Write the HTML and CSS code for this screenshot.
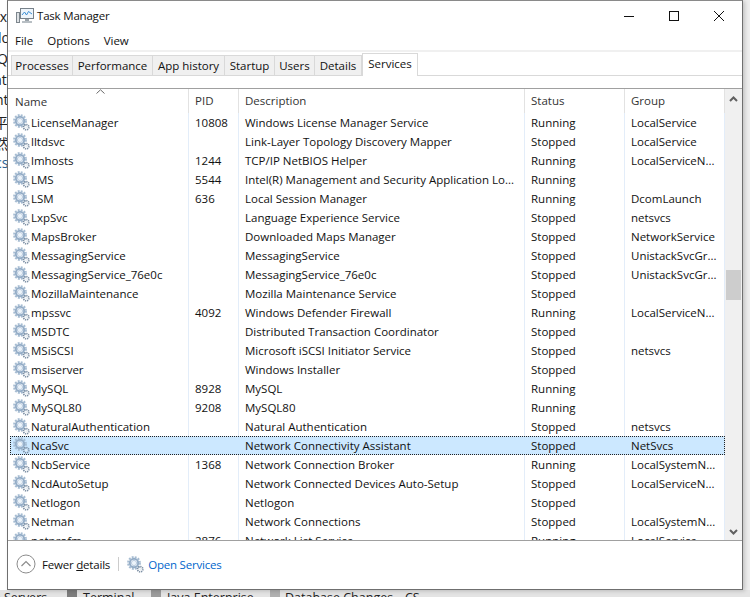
FILE: index.html
```html
<!DOCTYPE html>
<html lang="en">
<head>
<meta charset="utf-8">
<title>Task Manager</title>
<link rel="stylesheet" href="styles.css">
</head>
<body>
<svg class="defs" width="0" height="0" aria-hidden="true">
  <defs>
    <symbol id="gear" viewBox="0 0 17 17">
      <g fill="none">
        <circle cx="7" cy="7" r="6" stroke="#a6bcd2" stroke-width="1.8" stroke-dasharray="1.9 1.25"/>
        <circle cx="7" cy="7" r="4.2" stroke="#94adc7" stroke-width="2"/>
        <circle cx="7" cy="7" r="2.6" fill="#edf4fa" stroke="#bccde0" stroke-width="1"/>
        <circle cx="13.2" cy="13.2" r="2.6" stroke="#7b8ea3" stroke-width="1.8" stroke-dasharray="1.2 .8"/>
        <circle cx="13.2" cy="13.2" r="1" fill="#e6edf3"/>
      </g>
    </symbol>
  </defs>
</svg>
<div class="desktop">
  <div class="behind-left">
    <span class="frag f1">ax</span>
    <span class="frag f2">do</span>
    <span class="frag f3">Qu</span>
    <span class="frag f4">at</span>
    <span class="frag f5">ht</span>
    <span class="frag f6">平</span>
    <span class="frag f7">然</span>
    <span class="frag f8">cs</span>
  </div>
  <div class="behind-bottom">
    <span class="b1">p Servers</span>
    <i class="chip c2"></i>
    <span class="b2">Terminal</span>
    <i class="chip c3"></i>
    <span class="b3">Java Enterprise</span>
    <i class="chip c4"></i>
    <span class="b4">Database Changes</span>
    <span class="b5">CS</span>
  </div>

  <main class="window">
    <header class="titlebar">
      <svg class="app-icon" width="18" height="16" viewBox="0 0 18 16">
        <rect x="0.5" y="4.5" width="3" height="10" fill="#dfe3e6" stroke="#7d868d"/>
        <rect x="4.5" y="0.5" width="13" height="10" fill="#eef5fb" stroke="#77818a"/>
        <path d="M6 7 L8.5 4 L10.5 7 L12.5 3.5 L16 6" fill="none" stroke="#3b8fd6" stroke-width="1"/>
        <rect x="9" y="11" width="4" height="2" fill="#9aa3aa"/>
        <rect x="6" y="13" width="10" height="2" fill="#b8bfc4"/>
      </svg>
      <span class="title">Task Manager</span>
      <div class="win-controls">
        <svg width="12" height="12" viewBox="0 0 12 12"><path d="M1 6.5H11" stroke="#111" fill="none"/></svg>
        <svg width="12" height="12" viewBox="0 0 12 12"><rect x="1.5" y="1.5" width="9" height="9" stroke="#111" fill="none"/></svg>
        <svg width="12" height="12" viewBox="0 0 12 12"><path d="M1 1L11 11M11 1L1 11" stroke="#111" fill="none"/></svg>
      </div>
    </header>
    <nav class="menubar">
      <span>File</span><span>Options</span><span>View</span>
    </nav>
    <div class="tabs">
      <span class="tab t-proc">Processes</span>
      <span class="tab t-perf">Performance</span>
      <span class="tab t-app">App history</span>
      <span class="tab t-start">Startup</span>
      <span class="tab t-users">Users</span>
      <span class="tab t-det">Details</span>
      <span class="tab active t-svc">Services</span>
    </div>
    <section class="table-area">
      <div class="table">
        <div class="row head">
          <div class="cell name sort-cell"><svg class="sort" width="9" height="5" viewBox="0 0 9 5"><path d="M0.5 4.5L4.5 0.8L8.5 4.5" fill="none" stroke="#6a6a6a"/></svg>Name</div>
          <div class="cell pid">PID</div>
          <div class="cell desc">Description</div>
          <div class="cell status">Status</div>
          <div class="cell group">Group</div>
        </div>
        <div class="rows" id="rows"></div>
      </div>
      <aside class="scrollbar">
        <svg class="arrow" width="9" height="6" viewBox="0 0 9 6"><path d="M1 5L4.5 1.5L8 5" fill="none" stroke="#606060" stroke-width="2"/></svg>
        <div class="track"><div class="thumb"></div></div>
        <svg class="arrow" width="9" height="6" viewBox="0 0 9 6"><path d="M1 1L4.5 4.5L8 1" fill="none" stroke="#606060" stroke-width="2"/></svg>
      </aside>
    </section>
    <footer class="footer">
      <svg class="chev" width="20" height="20" viewBox="0 0 20 20"><circle cx="10" cy="10" r="9" fill="none" stroke="#8c8c8c"/><path d="M5.5 12L10 7.5L14.5 12" fill="none" stroke="#8c8c8c" stroke-width="1.2"/></svg>
      <span class="fewer">Fewer <u>d</u>etails</span>
      <span class="sep"></span>
      <svg class="gear foot-gear" width="17" height="17"><use href="#gear"/></svg>
      <span class="open">Open Services</span>
    </footer>
  </main>
</div>
<script src="app.js"></script>
</body>
</html>
```
FILE: app.js
```js
var data = [
["LicenseManager","10808","Windows License Manager Service","Running","LocalService"],
["lltdsvc","","Link-Layer Topology Discovery Mapper","Stopped","LocalService"],
["lmhosts","1244","TCP/IP NetBIOS Helper","Running","LocalServiceN..."],
["LMS","5544","Intel(R) Management and Security Application Lo...","Running",""],
["LSM","636","Local Session Manager","Running","DcomLaunch"],
["LxpSvc","","Language Experience Service","Stopped","netsvcs"],
["MapsBroker","","Downloaded Maps Manager","Stopped","NetworkService"],
["MessagingService","","MessagingService","Stopped","UnistackSvcGr..."],
["MessagingService_76e0c","","MessagingService_76e0c","Stopped","UnistackSvcGr..."],
["MozillaMaintenance","","Mozilla Maintenance Service","Stopped",""],
["mpssvc","4092","Windows Defender Firewall","Running","LocalServiceN..."],
["MSDTC","","Distributed Transaction Coordinator","Stopped",""],
["MSiSCSI","","Microsoft iSCSI Initiator Service","Stopped","netsvcs"],
["msiserver","","Windows Installer","Stopped",""],
["MySQL","8928","MySQL","Running",""],
["MySQL80","9208","MySQL80","Running",""],
["NaturalAuthentication","","Natural Authentication","Stopped","netsvcs"],
["NcaSvc","","Network Connectivity Assistant","Stopped","NetSvcs"],
["NcbService","1368","Network Connection Broker","Running","LocalSystemN..."],
["NcdAutoSetup","","Network Connected Devices Auto-Setup","Stopped","LocalServiceN..."],
["Netlogon","","Netlogon","Stopped",""],
["Netman","","Network Connections","Stopped","LocalSystemN..."],
["netprofm","2876","Network List Service","Running","LocalService"]
];
var classes = ["name","pid","desc","status","group"];
var host = document.getElementById("rows");
data.forEach(function (r) {
  var row = document.createElement("div");
  row.className = "row" + (r[0] === "NcaSvc" ? " selected" : "");
  r.forEach(function (v, i) {
    var c = document.createElement("div");
    c.className = "cell " + classes[i];
    if (i === 0) {
      c.innerHTML = '<svg class="gear" width="17" height="17"><use href="#gear"/></svg>';
    }
    c.appendChild(document.createTextNode(v));
    row.appendChild(c);
  });
  host.appendChild(row);
});
```
FILE: styles.css
```css
* { box-sizing: border-box; }
html, body { margin: 0; padding: 0; height: 100%; overflow: hidden; }
body { font-family: "Open Sans", "Noto Sans", sans-serif; font-size: 11.5px; color: #111; background: #eee; }
.defs { position: absolute; }
.desktop { position: relative; width: 750px; height: 597px; background: #eeeeee; overflow: hidden; }
.behind-left { position: absolute; left: 0; top: 0; width: 8px; height: 590px; background: #fff; overflow: hidden; }
.frag { position: absolute; left: -3px; height: 20px; line-height: 20px; font-size: 14px; color: #222; white-space: nowrap; }
.f1 { top: 7px; left: -8px; }
.f2 { top: 28px; left: -7px; }
.f3 { top: 49px; left: -3px; }
.f4 { top: 70px; left: -6px; }
.f5 { top: 90px; left: -5px; }
.f6 { top: 112px; left: -6px; font-family: "Noto Sans CJK SC", sans-serif; }
.f7 { top: 133px; left: -6px; font-family: "Noto Sans CJK SC", sans-serif; }
.f8 { top: 153px; left: -5px; color: #2d5f8f; }
.behind-bottom { position: absolute; left: 0; right: 0; top: 590px; height: 7px; font-size: 12.5px; line-height: 16px; background: #e4e4e4; overflow: hidden; }
.behind-bottom span { position: absolute; top: 0; color: #222; white-space: nowrap; }
.chip { position: absolute; top: 0; width: 10px; height: 7px; background: #7d7d7d; }
.b1 { left: -7px; }
.c2 { left: 67px; }
.b2 { left: 83px; }
.c3 { left: 151px; background: #9c9c9c; }
.b3 { left: 167px; }
.c4 { left: 270px; background: #b0b0b0; }
.b4 { left: 285px; }
.b5 { left: 405px; }
.window { position: absolute; left: 7px; top: 0; width: 736px; height: 590px; background: #fff; border: 1px solid #6f6f6f; border-top-color: #8a8a8a; display: flex; flex-direction: column; box-shadow: 2px 1px 4px rgba(0,0,0,.18); }
.titlebar { height: 29px; display: flex; align-items: center; padding: 0 0 0 8px; flex: none; }
.app-icon { flex: none; }
.title { margin-left: 3px; letter-spacing: -.2px; font-size: 11.5px; color: #111; }
.win-controls { margin-left: auto; display: flex; gap: 33px; padding-right: 17px; }
.menubar { height: 20px; display: flex; align-items: center; padding: 1px 0 0 7px; gap: 14px; flex: none; }
.tabs { height: 26px; display: flex; align-items: flex-end; padding-left: 3px; flex: none; border-top: 2px solid #f0f0f0; border-bottom: 1px solid #d9d9d9; }
.tab { height: 20px; display: flex; align-items: center; justify-content: center; background: #f0f0f0; border: 1px solid #d9d9d9; border-left: 0; border-bottom: 0; }
.tab:first-child { border-left: 1px solid #d9d9d9; }
.t-proc { width: 62px; }
.t-perf { width: 80px; }
.t-app { width: 72px; }
.t-start { width: 50px; }
.t-users { width: 40px; }
.t-det { width: 47px; }
.t-svc { width: 56px; }
.tab.active { height: 23px; padding-bottom: 3px; background: #fff; margin-bottom: -1px; border: 1px solid #d9d9d9; border-bottom: 0; }
.table-area { height: 453px; margin-top: 12px; flex: none; display: flex; border-top: 1px solid #a0a0a0; border-bottom: 1px solid #a0a0a0; overflow: hidden; }
.table { width: 717px; flex: none; overflow: hidden; padding-left: 2px; }
.row { display: flex; height: 19px; line-height: 19px; }
.row.head { height: 24px; line-height: 23px; }
.cell { padding-left: 6px; white-space: nowrap; overflow: hidden; border-right: 1px solid #e3edf9; }
.row.head .cell { border-right-color: #e2e2e2; color: #333; }
.name { width: 179px; display: flex; align-items: center; padding-left: 5px; }
.sort-cell { position: relative; }
.sort { position: absolute; left: 86px; top: 0; }
.pid { width: 50px; }
.desc { width: 286px; }
.status { width: 100px; }
.group { width: 100px; }
.gear { flex: none; margin-right: 1px; margin-left: -2px; }
.selected { background: #cce8ff; outline: 1px dotted #222; outline-offset: -1px; }
.selected .cell { border-right-color: transparent; }
.scrollbar { width: 17px; flex: none; background: #f0f0f0; display: flex; flex-direction: column; align-items: center; padding: 7px 0 5px; }
.arrow { flex: none; }
.track { flex: 1; width: 100%; position: relative; }
.thumb { position: absolute; left: 1px; width: 15px; top: 168px; height: 30px; background: #cdcdcd; }
.footer { flex: 1; display: flex; align-items: center; padding: 0 0 2px 8px; letter-spacing: -.2px; }
.chev { flex: none; }
.fewer { margin-left: 6px; color: #111; }
.sep { width: 1px; height: 14px; background: #ccc; margin: 0 8px; }
.foot-gear { margin-left: 0; margin-right: 0; }
.open { margin-left: 4px; color: #0066cc; }
```
